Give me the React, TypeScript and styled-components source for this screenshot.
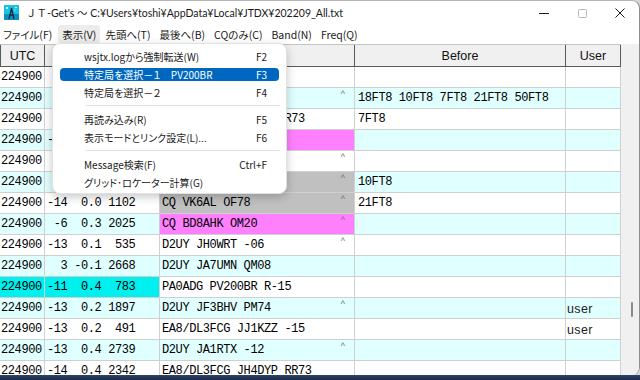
import React from 'react';
import styled, { createGlobalStyle } from 'styled-components';

const Global = createGlobalStyle`
  html, body { margin: 0; padding: 0; background: #d4d8de; overflow: hidden; }
  #root { width: 640px; height: 380px; }
`;

const Screen = styled.div`
  position: relative;
  width: 640px;
  height: 380px;
  display: flex;
  flex-direction: column;
  overflow: hidden;
  background: #d4d8de;
`;

const Window = styled.div`
  height: 375px;
  box-sizing: border-box;
  display: flex;
  flex-direction: column;
  background: #ffffff;
  border-top: 1px solid #b4b4b4;
  border-right: 1px solid #8e8e8e;
  border-radius: 0 8px 8px 0;
  overflow: hidden;
`;

const Desktop = styled.div`
  flex: 1;
  background: linear-gradient(180deg, #2c4468 0%, #1a2c48 100%);
`;

const TitleBar = styled.div`
  height: 23px;
  display: flex;
  align-items: center;
  padding-left: 4px;
  font-family: "Lato", "Noto Sans CJK JP", sans-serif;
  font-size: 10.5px;
  color: #1a1a1a;
  white-space: nowrap;
`;

const TitleText = styled.span`
  margin-left: 7px;
`;

const Controls = styled.div`
  margin-left: auto;
  display: flex;
  height: 100%;
`;

const ControlButton = styled.div`
  width: 38px;
  height: 100%;
  display: flex;
  align-items: center;
  justify-content: center;
`;

const MenuBar = styled.div`
  height: 20px;
  display: flex;
  align-items: center;
  gap: 1px;
  font-family: "Noto Sans CJK JP", sans-serif;
  font-feature-settings: "palt";
  font-size: 10.5px;
  color: #1a1a1a;
`;

const MenuBarItem = styled.div<{ $open?: boolean }>`
  height: 18px;
  display: flex;
  align-items: center;
  padding: 0 4px;
  border-radius: 3px;
  background: ${(p) => (p.$open ? '#ececec' : 'transparent')};
  &:first-child { padding: 0 5px 0 3px; }
`;

const Body = styled.div`
  flex: 1;
  display: flex;
  min-height: 0;
  background: #f0f0f0;
`;

const Grid = styled.div`
  width: 621px;
  display: flex;
  flex-direction: column;
  overflow: hidden;
  background: #ffffff;
`;

const HeaderRow = styled.div`
  height: 23px;
  display: flex;
  flex-shrink: 0;
  box-sizing: border-box;
  border-top: 1px solid #c4c4c4;
`;

const HeaderCell = styled.div<{ $w: number; $first?: boolean }>`
  width: ${(p) => p.$w}px;
  box-sizing: border-box;
  background: #f0f0f0;
  border-right: 1px solid #5a5a5a;
  border-bottom: 1px solid #5a5a5a;
  border-left: ${(p) => (p.$first ? '1px solid #5a5a5a' : 'none')};
  display: flex;
  align-items: center;
  justify-content: center;
  font-family: "Liberation Sans", sans-serif;
  font-size: 12.5px;
  color: #111;
`;

const Row = styled.div`
  height: 21px;
  display: flex;
  flex-shrink: 0;
`;

const Cell = styled.div<{ $w: number; $bg: string; $pad?: number }>`
  width: ${(p) => p.$w}px;
  box-sizing: border-box;
  background: ${(p) => p.$bg};
  border-right: 1px solid #d0d0d0;
  border-bottom: 1px solid #d0d0d0;
  padding-left: ${(p) => p.$pad ?? 2}px;
  display: flex;
  justify-content: space-between;
  align-items: flex-start;
  font-family: "Liberation Mono", monospace;
  font-size: 12px;
  letter-spacing: -0.4px;
  line-height: 20px;
  color: #000;
  white-space: pre;
  overflow: hidden;
`;

const Caret = styled.span`
  font-family: "Liberation Sans", sans-serif;
  font-size: 9px;
  line-height: 12px;
  letter-spacing: 0;
  color: #707070;
  padding-right: 9px;
`;

const UserText = styled.span`
  font-family: "Liberation Sans", sans-serif;
  font-size: 12.5px;
  letter-spacing: 0.4px;
  line-height: 22px;
  color: #222;
`;

const ScrollTrack = styled.div`
  flex: 1;
  display: flex;
  justify-content: center;
  padding-top: 258px;
  padding-left: 3px;
  box-sizing: border-box;
`;

const ScrollThumb = styled.div`
  width: 2px;
  height: 15px;
  border-radius: 1px;
  background: #8a8a8a;
`;

const PopupMenu = styled.div`
  position: absolute;
  left: 52px;
  top: 43px;
  width: 235px;
  box-sizing: border-box;
  display: flex;
  flex-direction: column;
  padding: 3px 0 2px;
  background: #ffffff;
  border: 1px solid #e2e2e2;
  border-radius: 8px;
  box-shadow: 0 3px 10px rgba(0, 0, 0, 0.22);
  font-family: "Noto Sans CJK JP", sans-serif;
  font-feature-settings: "palt";
  font-size: 10px;
  color: #1a1a1a;
`;

const PopupItem = styled.div<{ $active?: boolean }>`
  height: 13px;
  margin: 3px 7px 2px;
  padding: 0 12px 0 24px;
  border-radius: 4px;
  display: flex;
  align-items: center;
  justify-content: space-between;
  line-height: 13px;
  white-space: pre;
  background: ${(p) => (p.$active ? '#0067c0' : 'transparent')};
  color: ${(p) => (p.$active ? '#ffffff' : '#1a1a1a')};
`;

const PopupSep = styled.div`
  height: 1px;
  flex-shrink: 0;
  margin: 4px 6px 4px 33px;
  background: #e0e0e0;
`;

const COLS = [45, 115, 195, 211, 55];
const WHITE = '#ffffff';
const LCYAN = '#e0ffff';
const MAGENTA = '#ff80ff';
const GRAY = '#c0c0c0';
const AQUA = '#00f0f0';

type RowData = {
  info: string;
  msg: string;
  caret?: boolean;
  msgBg?: string;
  before?: string;
  user?: string;
  hi?: boolean;
};

const rows: RowData[] = [
  { info: ' -9  0.1 1245', msg: 'CQ JA3QOS PM74' },
  { info: ' -7  0.2  864', msg: 'CQ DU1KT PK04', caret: true, before: '18FT8 10FT8 7FT8 21FT8 50FT8' },
  { info: ' -5  0.1 1683', msg: 'EA8/DL3FCG JA1KJ RR73', before: '7FT8' },
  { info: '-12  0.3 2214', msg: 'CQ VR2XAN OL72', msgBg: MAGENTA },
  { info: ' -8  0.2 1378', msg: 'CQ JH1AJT QM05', caret: true },
  { info: ' -4  0.4 1750', msg: 'CQ YB1ALL OI33', caret: true, msgBg: GRAY, before: '10FT8' },
  { info: '-14  0.0 1102', msg: 'CQ VK6AL OF78', caret: true, msgBg: GRAY, before: '21FT8' },
  { info: ' -6  0.3 2025', msg: 'CQ BD8AHK OM20', caret: true, msgBg: MAGENTA },
  { info: '-13  0.1  535', msg: 'D2UY JH0WRT -06', caret: true },
  { info: '  3 -0.1 2668', msg: 'D2UY JA7UMN QM08' },
  { info: '-11  0.4  783', msg: 'PA0ADG PV200BR R-15', hi: true },
  { info: '-13  0.2 1897', msg: 'D2UY JF3BHV PM74', caret: true, user: 'user' },
  { info: '-13  0.2  491', msg: 'EA8/DL3FCG JJ1KZZ -15', user: 'user' },
  { info: '-13  0.4 2739', msg: 'D2UY JA1RTX -12', caret: true },
  { info: '-14  0.4 2342', msg: 'EA8/DL3FCG JH4DYP RR73' },
];

const menuItems: ({ label: string; key: string; active?: boolean } | 'sep')[] = [
  { label: 'wsjtx.logから強制転送(W)', key: 'F2' },
  { label: '特定局を選択－１　PV200BR', key: 'F3', active: true },
  { label: '特定局を選択－２', key: 'F4' },
  'sep',
  { label: '再読み込み(R)', key: 'F5' },
  { label: '表示モードとリンク設定(L)...', key: 'F6' },
  'sep',
  { label: 'Message検索(F)', key: 'Ctrl+F' },
  { label: 'グリッド･ロケーター計算(G)', key: '' },
];

const AppIcon = () => (
  <svg width="15" height="15" viewBox="0 0 15 15">
    <rect x="0" y="0" width="15" height="15" fill="#19c3e6" />
    <rect x="0" y="9" width="15" height="6" fill="#0f8fc0" />
    <path d="M7.5 3 L5 14 M7.5 3 L10 14 M5.8 10 H9.2 M6.4 7 H8.6" stroke="#1b2a3a" strokeWidth="1.3" fill="none" />
    <circle cx="3" cy="3" r="1" fill="#ffffff" />
    <circle cx="12" cy="2.5" r="0.8" fill="#ffffff" />
    <circle cx="11" cy="5" r="0.6" fill="#ffffff" />
  </svg>
);

export default function App() {
  return (
    <Screen>
      <Global />
      <Window>
        <TitleBar>
          <AppIcon />
          <TitleText>ＪＴ-Get's ～ C:¥Users¥toshi¥AppData¥Local¥JTDX¥202209_All.txt</TitleText>
          <Controls>
            <ControlButton>
              <svg width="10" height="10" viewBox="0 0 10 10">
                <path d="M0 5.5 H10" stroke="#1a1a1a" strokeWidth="1" />
              </svg>
            </ControlButton>
            <ControlButton>
              <svg width="10" height="10" viewBox="0 0 10 10">
                <rect x="1.5" y="1.5" width="8" height="8" rx="1" stroke="#b8b8b8" strokeWidth="1" fill="none" />
              </svg>
            </ControlButton>
            <ControlButton>
              <svg width="10" height="10" viewBox="0 0 10 10">
                <path d="M0.5 0.5 L9.5 9.5 M9.5 0.5 L0.5 9.5" stroke="#1a1a1a" strokeWidth="1" />
              </svg>
            </ControlButton>
          </Controls>
        </TitleBar>
        <MenuBar>
          <MenuBarItem>ファイル(F)</MenuBarItem>
          <MenuBarItem $open>表示(V)</MenuBarItem>
          <MenuBarItem>先頭へ(T)</MenuBarItem>
          <MenuBarItem>最後へ(B)</MenuBarItem>
          <MenuBarItem>CQのみ(C)</MenuBarItem>
          <MenuBarItem>Band(N)</MenuBarItem>
          <MenuBarItem>Freq(Q)</MenuBarItem>
        </MenuBar>
        <Body>
          <Grid>
            <HeaderRow>
              <HeaderCell $w={COLS[0]} $first>UTC</HeaderCell>
              <HeaderCell $w={COLS[1]} />
              <HeaderCell $w={COLS[2]} />
              <HeaderCell $w={COLS[3]}>Before</HeaderCell>
              <HeaderCell $w={COLS[4]}>User</HeaderCell>
            </HeaderRow>
            {rows.map((r, i) => {
              const base = i % 2 === 1 ? LCYAN : WHITE;
              const left = r.hi ? AQUA : base;
              return (
                <Row key={i}>
                  <Cell $w={COLS[0]} $bg={left} $pad={1}>224900</Cell>
                  <Cell $w={COLS[1]} $bg={left}>{r.info}</Cell>
                  <Cell $w={COLS[2]} $bg={r.msgBg ?? base}>
                    <span>{r.msg}</span>
                    {r.caret && <Caret>^</Caret>}
                  </Cell>
                  <Cell $w={COLS[3]} $bg={base} $pad={3}>{r.before ?? ''}</Cell>
                  <Cell $w={COLS[4]} $bg={base} $pad={1}>
                    {r.user && <UserText>{r.user}</UserText>}
                  </Cell>
                </Row>
              );
            })}
          </Grid>
          <ScrollTrack>
            <ScrollThumb />
          </ScrollTrack>
        </Body>
      </Window>
      <Desktop />
      <PopupMenu>
        {menuItems.map((m, i) =>
          m === 'sep' ? (
            <PopupSep key={i} />
          ) : (
            <PopupItem key={i} $active={m.active}>
              <span>{m.label}</span>
              <span>{m.key}</span>
            </PopupItem>
          )
        )}
      </PopupMenu>
    </Screen>
  );
}
